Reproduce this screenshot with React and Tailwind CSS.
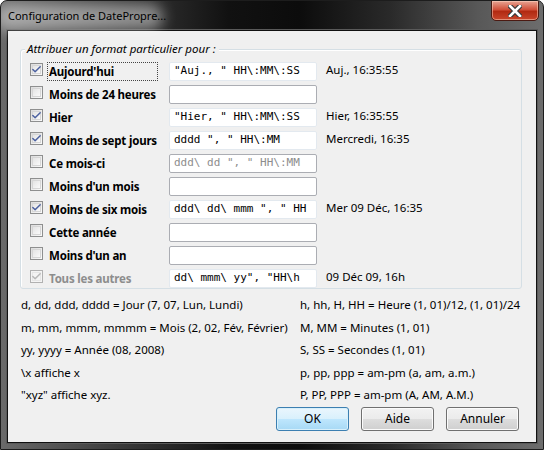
import { Check } from 'lucide-react'

const rows = [
  { label: "Aujourd'hui", checked: true, value: '"Auj., " HH\\:MM\\:SS', preview: 'Auj., 16:35:55', focus: true },
  { label: 'Moins de 24 heures', checked: false, value: '' },
  { label: 'Hier', checked: true, value: '"Hier, " HH\\:MM\\:SS', preview: 'Hier, 16:35:55' },
  { label: 'Moins de sept jours', checked: true, value: 'dddd ", " HH\\:MM', preview: 'Mercredi, 16:35' },
  { label: 'Ce mois-ci', checked: false, value: 'ddd\\ dd ", " HH\\:MM', dim: true },
  { label: "Moins d'un mois", checked: false, value: '' },
  { label: 'Moins de six mois', checked: true, value: 'ddd\\ dd\\ mmm ", " HH', preview: 'Mer 09 Déc, 16:35' },
  { label: 'Cette année', checked: false, value: '' },
  { label: "Moins d'un an", checked: false, value: '' },
  { label: 'Tous les autres', checked: true, disabled: true, value: 'dd\\ mmm\\ yy", "HH\\h', preview: '09 Déc 09, 16h' },
]

const legendLeft = [
  'd, dd, ddd, dddd = Jour (7, 07, Lun, Lundi)',
  'm, mm, mmm, mmmm = Mois (2, 02, Fév, Février)',
  'yy, yyyy = Année (08, 2008)',
  '\\x affiche x',
  '"xyz" affiche xyz.',
]

const legendRight = [
  'h, hh, H, HH = Heure (1, 01)/12, (1, 01)/24',
  'M, MM = Minutes (1, 01)',
  'S, SS = Secondes (1, 01)',
  'p, pp, ppp = am-pm (a, am, a.m.)',
  'P, PP, PPP = am-pm (A, AM, A.M.)',
]

function CheckBox({ checked, disabled }) {
  return (
    <div
      className={
        'relative -top-[2px] grid h-[13px] w-[13px] shrink-0 place-items-center border ' +
        (disabled ? 'border-[#b1b1b1] bg-[#f4f4f4]' : 'border-[#8e8f8f] bg-gradient-to-br from-[#dcdcdc] to-[#fbfbfb]')
      }
    >
      <div className={'h-[9px] w-[9px] border ' + (disabled ? 'border-[#e6e6e6] bg-[#f4f4f4]' : 'border-[#d6d6d6] bg-gradient-to-br from-[#e4e4e4] to-[#fafafa]')}>
        {checked && (
          <Check
            size={11}
            strokeWidth={3.2}
            className={'-ml-[2px] -mt-[2px] ' + (disabled ? 'text-[#b8b8b8]' : 'text-[#4c61a0]')}
          />
        )}
      </div>
    </div>
  )
}

function Button({ children, primary }) {
  return (
    <button
      className={
        'h-[24px] w-[73px] rounded-[3px] border text-[12px] text-black ' +
        (primary
          ? 'border-[#3c7fb1] bg-[linear-gradient(#eaf6fd_0%,#d9f0fc_50%,#bee6fd_51%,#a7d9f5_100%)] shadow-[inset_0_0_0_1px_#d8f0fb]'
          : 'border-[#707070] bg-[linear-gradient(#f2f2f2_0%,#ebebeb_50%,#dddddd_51%,#cfcfcf_100%)] shadow-[inset_0_0_0_1px_#fbfbfb]')
      }
    >
      {children}
    </button>
  )
}

export default function App() {
  return (
    <div
      className="flex h-[450px] w-[544px] flex-col overflow-hidden rounded-t-[7px] border border-[#1d1d1d] bg-[linear-gradient(90deg,#6a6a6a_0%,#3a3a3a_22%,#111111_42%,#0c0c0c_55%,#2a2a2a_72%,#585858_88%,#6d6d6d_100%)] text-[11.5px] text-black"
      style={{ fontFamily: '"Noto Sans", "Open Sans", sans-serif' }}
    >
      {/* title bar */}
      <div className="relative flex h-[29px] shrink-0 items-start">
        <div className="absolute left-[-6px] top-[3px] h-[26px] w-[168px] rounded-full bg-white/45 blur-[7px]" />
        <span className="relative ml-[7px] mt-[7px] text-[11px] leading-[16px] text-black">
          Configuration de DatePropre...
        </span>
        <div className="absolute right-[4px] top-[-1px] grid h-[21px] w-[48px] place-items-center rounded-b-[5px] border border-[#4b1a12] bg-[linear-gradient(#e8a493_0%,#d1503a_45%,#b22a12_55%,#c8462c_100%)] shadow-[inset_0_0_0_1px_rgba(255,220,200,0.5)]">
          <svg width="14" height="12" viewBox="0 0 14 12">
            <path d="M2 1 L12 11 M12 1 L2 11" stroke="#3a3a3a" strokeWidth="5" strokeLinecap="square" />
            <path d="M2 1 L12 11 M12 1 L2 11" stroke="#ffffff" strokeWidth="2.6" strokeLinecap="square" />
          </svg>
        </div>
      </div>

      {/* client area */}
      <div className="mx-[6px] mb-[6px] flex flex-1 border border-[#111] shadow-[0_0_0_1px_#5a5a5a]">
        <div className="flex flex-1 flex-col bg-[#f0f0f0] pl-[12px] pr-[14px]">
          {/* group box */}
          <div className="relative mt-[18px] h-[240px] shrink-0 rounded-[3px] border border-[#d5dfe5] shadow-[inset_1px_1px_0_#fff]">
            <span className="absolute -top-[9px] left-[4px] bg-[#f0f0f0] pl-[2px] pr-[3px] italic leading-[16px]">
              Attribuer un format particulier pour :
            </span>
            <div className="flex flex-col pl-[9px] pt-[10px]">
              {rows.map((r) => (
                <div key={r.label} className="flex h-[23px] items-center">
                  <CheckBox checked={r.checked} disabled={r.disabled} />
                  <div
                    className={
                      'ml-[4px] flex h-[19px] w-[111px] shrink-0 items-center whitespace-nowrap px-[2px] font-bold tracking-[-0.2px] ' +
                      (r.focus ? 'outline-1 outline-dotted outline-[#444] -outline-offset-1 ' : '') +
                      (r.disabled ? 'text-[#8d8d8d]' : 'text-black')
                    }
                  >
                    {r.label}
                  </div>
                  <div
                    className={
                      'ml-[11px] flex h-[19px] w-[148px] shrink-0 items-center overflow-hidden rounded-[2px] border bg-white px-[4px] whitespace-pre text-[11px] ' +
                      (r.value && !r.dim ? 'border-[#e3e9ef] ' : 'border-[#abadb3] ') +
                      (r.dim ? 'text-[#8d8d8d]' : 'text-black')
                    }
                    style={{ fontFamily: '"DejaVu Sans Mono", monospace' }}
                  >
                    {r.value}
                  </div>
                  <span className="-mt-[4px] ml-[9px] whitespace-nowrap">{r.preview}</span>
                </div>
              ))}
            </div>
          </div>

          {/* format help */}
          <div className="mt-[5px] flex pl-[1px]">
            <div className="flex w-[279px] flex-col">
              {legendLeft.map((t) => (
                <div key={t} className="h-[22.5px] leading-[22px] whitespace-pre">{t}</div>
              ))}
            </div>
            <div className="flex flex-col">
              {legendRight.map((t) => (
                <div key={t} className="h-[22.5px] leading-[22px] whitespace-pre">{t}</div>
              ))}
            </div>
          </div>

          <div className="flex justify-end gap-[12px] pr-[3px]">
            <Button primary>OK</Button>
            <Button>Aide</Button>
            <Button>Annuler</Button>
          </div>
        </div>
      </div>
    </div>
  )
}
